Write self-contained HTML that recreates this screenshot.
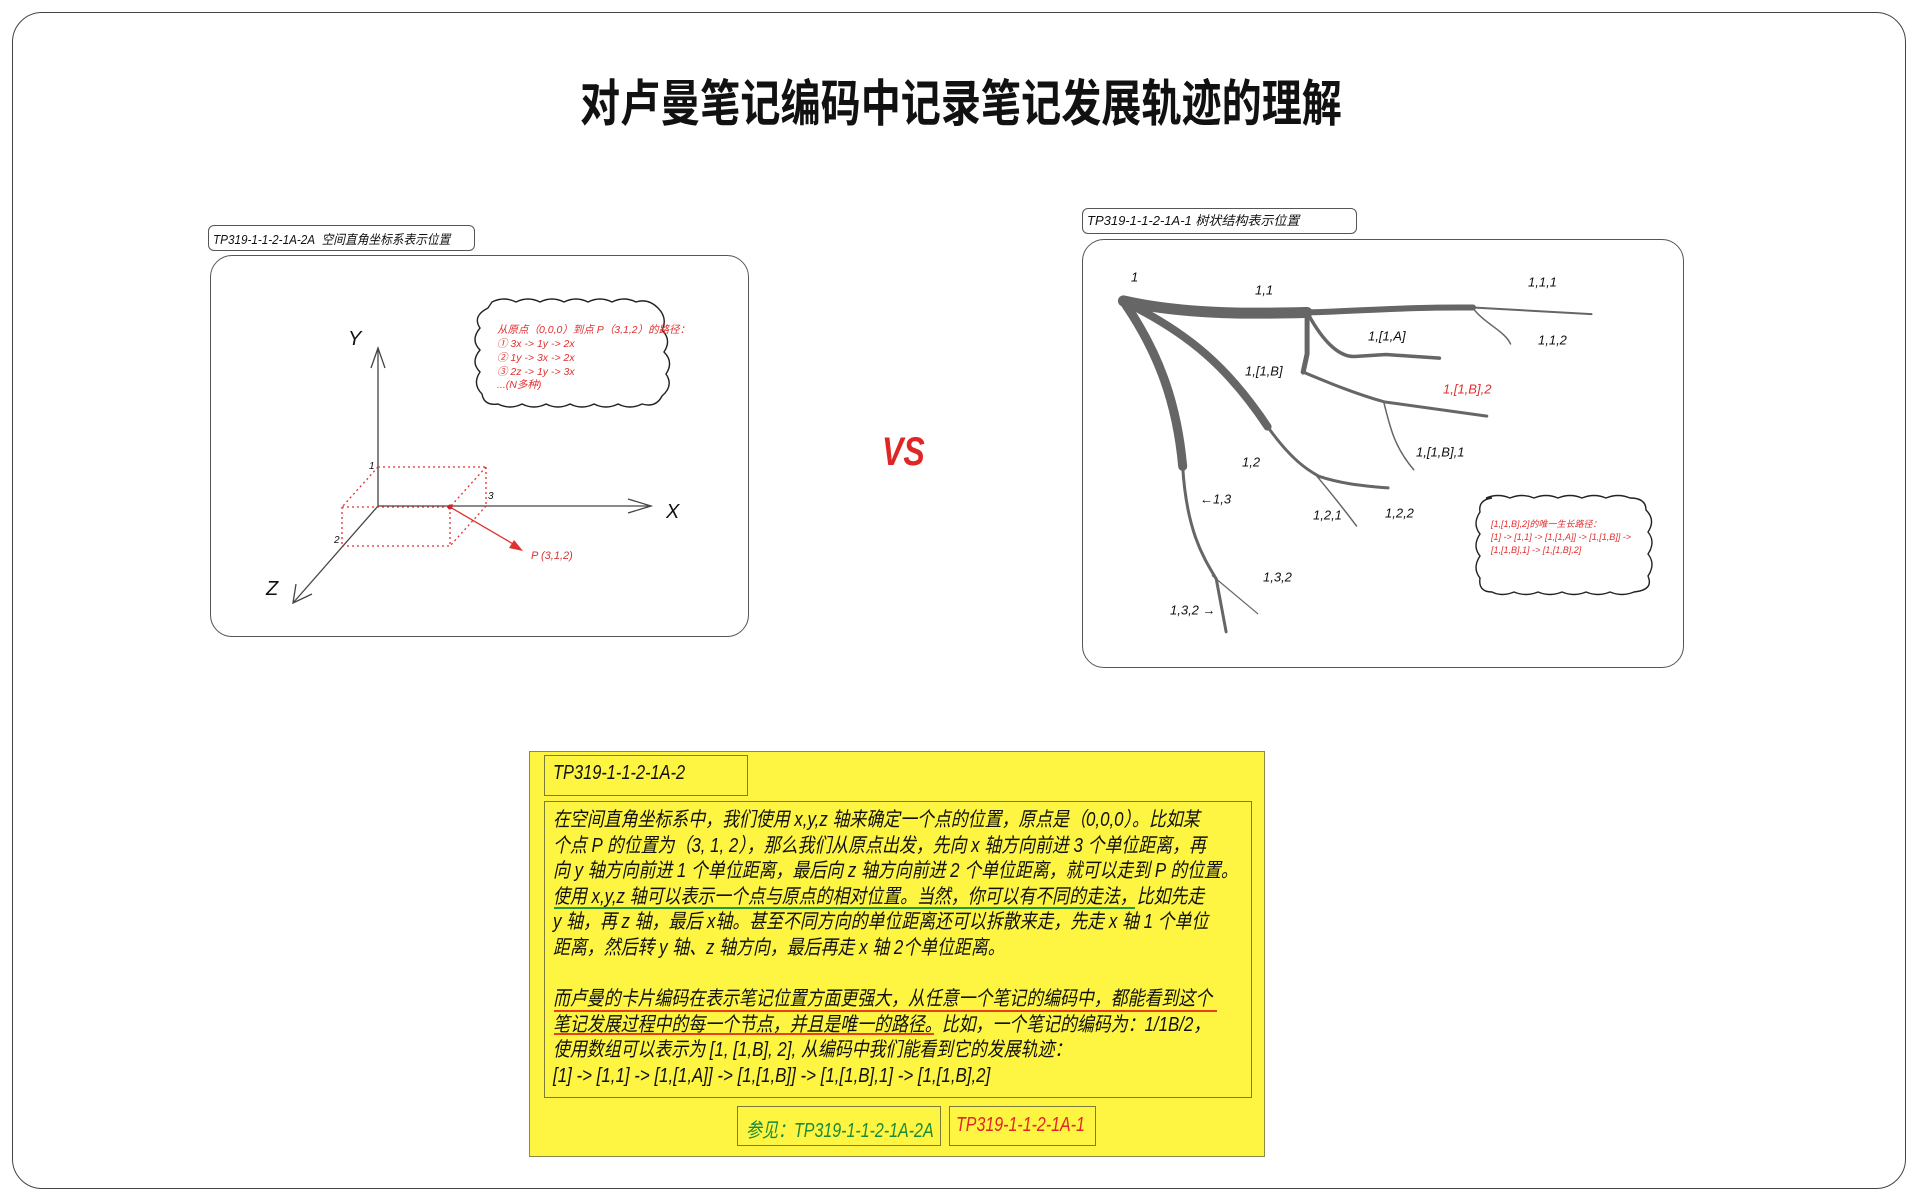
<!DOCTYPE html>
<html><head><meta charset="utf-8"><style>
html,body{margin:0;padding:0;background:#fff;}
body{width:1920px;height:1201px;position:relative;overflow:hidden;font-family:"Liberation Sans","Noto Sans CJK SC",sans-serif;}
.abs{position:absolute;}
.frame{left:12px;top:12px;width:1894px;height:1177px;border:1.5px solid #444;border-radius:30px;box-sizing:border-box;}
.title{left:580px;top:72px;width:1000px;font-size:50px;font-weight:bold;color:#111;transform:scaleX(0.802);transform-origin:left top;white-space:nowrap;line-height:64px;}
.lbl{border:1.5px solid #555;border-radius:6px;box-sizing:border-box;font-style:italic;white-space:nowrap;color:#111;}
.panel{border:1.5px solid #555;border-radius:22px;box-sizing:border-box;}
.yellow{left:529px;top:751px;width:736px;height:406px;background:#fdf542;border:1.5px solid #8a8a4a;box-sizing:border-box;}
.bx{border:1.5px solid #7a7a3a;box-sizing:border-box;}
.ln{position:absolute;left:553px;font-size:20px;line-height:25.6px;height:25.6px;white-space:nowrap;transform:scaleX(0.845);transform-origin:left center;color:#111;font-style:italic;}
.ul{position:absolute;height:2px;}
</style></head><body>
<div class="abs frame"></div>
<div class="abs title">对卢曼笔记编码中记录笔记发展轨迹的理解</div>

<div class="abs lbl" style="left:208px;top:225px;width:267px;height:26px;"></div>
<div class="abs" style="left:213px;top:229px;font-size:13px;font-style:italic;white-space:nowrap;color:#111;transform:scaleX(0.9);transform-origin:left top;">TP319-1-1-2-1A-2A&nbsp; 空间直角坐标系表示位置</div>
<div class="abs panel" style="left:210px;top:255px;width:539px;height:382px;"></div>

<div class="abs lbl" style="left:1082px;top:208px;width:275px;height:26px;font-size:13px;line-height:23px;padding-left:4px;">TP319-1-1-2-1A-1 树状结构表示位置</div>
<div class="abs panel" style="left:1082px;top:239px;width:602px;height:429px;"></div>

<div class="abs" style="left:882px;top:430px;font-size:40px;font-style:italic;font-weight:bold;color:#e02525;transform:scaleX(0.8);transform-origin:left top;">VS</div>

<svg class="abs" style="left:0;top:0" width="1920" height="1201" viewBox="0 0 1920 1201">
<g stroke="#444" stroke-width="1.3" fill="none">
<line x1="378" y1="506" x2="378" y2="348"/>
<polyline points="371,368 378,348 385,368"/>
<line x1="378" y1="506" x2="651" y2="506"/>
<polyline points="628,499 651,506 628,513"/>
<line x1="378" y1="506" x2="293" y2="603"/>
<polyline points="296,584 293,603 312,594"/>
</g>
<g stroke="#e03030" stroke-width="1.3" fill="none" stroke-dasharray="2,3">
<line x1="378" y1="467" x2="486" y2="467"/><line x1="486" y1="467" x2="486" y2="506"/>
<line x1="378" y1="467" x2="342" y2="507"/><line x1="486" y1="467" x2="450" y2="507"/>
<line x1="486" y1="506" x2="450" y2="546"/><line x1="342" y1="507" x2="450" y2="507"/>
<line x1="450" y1="507" x2="450" y2="546"/><line x1="342" y1="546" x2="450" y2="546"/>
<line x1="342" y1="507" x2="342" y2="546"/>
</g>
<circle cx="450" cy="507" r="2.5" fill="#d02030"/>
<line x1="450" y1="507" x2="520" y2="548" stroke="#e03030" stroke-width="1.3"/>
<polygon points="523,551 509,548 514,540" fill="#e03030"/>
<g font-family="Liberation Sans" font-style="italic" fill="#111">
<text x="348" y="345" font-size="20">Y</text>
<text x="666" y="518" font-size="20">X</text>
<text x="266" y="595" font-size="20">Z</text>
<text x="369" y="469" font-size="10">1</text>
<text x="488" y="499" font-size="10">3</text>
<text x="334" y="543" font-size="10">2</text>
</g>
<text x="531" y="559" font-size="11" font-style="italic" fill="#e03030" font-family="Liberation Sans">P (3,1,2)</text>
<path d="M492,302 q12,-6 24,0 q12,-6 24,0 q12,-6 24,0 q12,-6 24,0 q12,-6 24,0 q12,-6 24,0 q12,-4 22,6 q10,10 4,22 q10,10 2,22 q10,10 2,22 q8,12 -4,22 q-6,12 -20,8 q-12,6 -24,0 q-12,6 -24,0 q-12,6 -24,0 q-12,6 -24,0 q-12,6 -24,0 q-12,6 -24,0 q-14,2 -16,-10 q-10,-10 -2,-22 q-10,-10 0,-22 q-10,-10 0,-22 q-8,-12 8,-20 z" fill="#fff" stroke="#222" stroke-width="1.4"/>
<g font-size="10.5" font-style="italic" fill="#e03030" font-family="Liberation Sans,Noto Sans CJK SC,sans-serif">
<text x="497" y="333">从原点（0,0,0）到点 P（3,1,2）的路径：</text>
<text x="497" y="347">① 3x -&gt; 1y -&gt; 2x</text>
<text x="497" y="361">② 1y -&gt; 3x -&gt; 2x</text>
<text x="497" y="375">③ 2z -&gt; 1y -&gt; 3x</text>
<text x="497" y="388">...(N多种)</text>
</g>
<g transform="translate(1070.1,201.6) scale(0.395,0.331)" fill="none" stroke="#666" stroke-linecap="round">
<path d="M135,300 C300,345 500,338 600,335" stroke-width="11" vector-effect="non-scaling-stroke"/>
<path d="M600,335 C750,330 850,318 1020,320" stroke-width="6" vector-effect="non-scaling-stroke"/>
<path d="M1020,320 L1320,340" stroke-width="2" vector-effect="non-scaling-stroke"/>
<path d="M1020,322 C1050,370 1100,390 1115,430" stroke-width="1.5" vector-effect="non-scaling-stroke"/>
<path d="M600,340 L600,460 L590,515" stroke-width="5" vector-effect="non-scaling-stroke"/>
<path d="M605,345 C640,420 680,470 720,468 L800,462 L935,473" stroke-width="3.5" vector-effect="non-scaling-stroke"/>
<path d="M590,515 C650,545 720,580 795,605 L1055,648" stroke-width="3" vector-effect="non-scaling-stroke"/>
<path d="M795,610 C810,680 820,740 870,810" stroke-width="1.5" vector-effect="non-scaling-stroke"/>
<path d="M150,310 C300,400 400,500 500,680" stroke-width="8" vector-effect="non-scaling-stroke"/>
<path d="M500,680 C560,780 600,810 630,830 C680,850 730,858 805,865" stroke-width="3" vector-effect="non-scaling-stroke"/>
<path d="M625,830 C660,880 700,940 725,980" stroke-width="1.5" vector-effect="non-scaling-stroke"/>
<path d="M140,310 C220,450 270,600 285,800" stroke-width="9" vector-effect="non-scaling-stroke"/>
<path d="M285,800 C295,1000 340,1080 370,1140 L395,1300" stroke-width="3" vector-effect="non-scaling-stroke"/>
<path d="M360,1130 L475,1245" stroke-width="1.2" vector-effect="non-scaling-stroke"/>
</g>
<g font-size="13" font-style="italic" fill="#111" font-family="Liberation Sans" dominant-baseline="middle">
<text x="1131" y="278">1</text>
<text x="1255" y="291">1,1</text>
<text x="1528" y="283">1,1,1</text>
<text x="1538" y="341">1,1,2</text>
<text x="1368" y="337">1,[1,A]</text>
<text x="1245" y="372">1,[1,B]</text>
<text x="1443" y="390" fill="#e03030">1,[1,B],2</text>
<text x="1416" y="453">1,[1,B],1</text>
<text x="1242" y="463">1,2</text>
<text x="1200" y="500">←1,3</text>
<text x="1313" y="516">1,2,1</text>
<text x="1385" y="514">1,2,2</text>
<text x="1263" y="578">1,3,2</text>
<text x="1170" y="611">1,3,2 →</text>
</g>
<path d="M1486,498 q12,-5 24,0 q12,-5 24,0 q12,-5 24,0 q12,-5 24,0 q12,-5 24,0 q12,-5 24,0 q16,0 16,12 q10,10 2,22 q8,10 0,22 q8,10 0,22 q6,14 -14,16 q-12,5 -24,0 q-12,5 -24,0 q-12,5 -24,0 q-12,5 -24,0 q-12,5 -24,0 q-12,5 -22,0 q-14,0 -12,-14 q-8,-10 0,-22 q-8,-10 0,-22 q-8,-10 0,-22 q-2,-12 12,-14 z" fill="#fff" stroke="#222" stroke-width="1.4"/>
<g font-size="9" font-style="italic" fill="#e03030" font-family="Liberation Sans,Noto Sans CJK SC,sans-serif">
<text x="1491" y="527">[1,[1,B],2]的唯一生长路径：</text>
<text x="1491" y="540">[1] -&gt; [1,1] -&gt; [1,[1,A]] -&gt; [1,[1,B]] -&gt;</text>
<text x="1491" y="553">[1,[1,B],1] -&gt; [1,[1,B],2]</text>
</g>
</svg>

<div class="abs yellow"></div>
<div class="abs bx" style="left:544px;top:755px;width:204px;height:41px;"></div>
<div class="abs" style="left:553px;top:762px;font-size:20px;font-style:italic;transform:scaleX(0.82);transform-origin:left top;white-space:nowrap;color:#111;">TP319-1-1-2-1A-2</div>
<div class="abs bx" style="left:544px;top:801px;width:708px;height:297px;"></div>
<div class="ln" style="top:808px">在空间直角坐标系中，我们使用 x,y,z 轴来确定一个点的位置，原点是（0,0,0）。比如某</div>
<div class="ln" style="top:833.6px">个点 P 的位置为（3, 1, 2），那么我们从原点出发，先向 x 轴方向前进 3 个单位距离，再</div>
<div class="ln" style="top:859.2px">向 y 轴方向前进 1 个单位距离，最后向 z 轴方向前进 2 个单位距离，就可以走到 P 的位置。</div>
<div class="ln" style="top:884.8px">使用 x,y,z 轴可以表示一个点与原点的相对位置。当然，你可以有不同的走法，比如先走</div>
<div class="ln" style="top:910.4px">y 轴，再 z 轴，最后 x轴。甚至不同方向的单位距离还可以拆散来走，先走 x 轴 1 个单位</div>
<div class="ln" style="top:936px">距离，然后转 y 轴、z 轴方向，最后再走 x 轴 2个单位距离。</div>
<div class="ln" style="top:987.2px">而卢曼的卡片编码在表示笔记位置方面更强大，从任意一个笔记的编码中，都能看到这个</div>
<div class="ln" style="top:1012.8px">笔记发展过程中的每一个节点，并且是唯一的路径。比如，一个笔记的编码为：1/1B/2，</div>
<div class="ln" style="top:1038.4px">使用数组可以表示为 [1, [1,B], 2], 从编码中我们能看到它的发展轨迹：</div>
<div class="ln" style="top:1064px">[1] -&gt; [1,1] -&gt; [1,[1,A]] -&gt; [1,[1,B]] -&gt; [1,[1,B],1] -&gt; [1,[1,B],2]</div>
<div class="ul" style="left:554px;top:907px;width:581px;background:#1f9a3a;"></div>
<div class="ul" style="left:554px;top:1010px;width:663px;background:#e8401f;"></div>
<div class="ul" style="left:554px;top:1033px;width:380px;background:#e8401f;"></div>
<div class="abs bx" style="left:737px;top:1106px;width:204px;height:40px;"></div>
<div class="abs bx" style="left:949px;top:1106px;width:147px;height:40px;"></div>
<div class="abs" style="left:746px;top:1114px;font-size:20px;font-style:italic;color:#1a8a3a;white-space:nowrap;transform:scaleX(0.8);transform-origin:left top;">参见：TP319-1-1-2-1A-2A</div>
<div class="abs" style="left:956px;top:1114px;font-size:20px;font-style:italic;color:#e02525;white-space:nowrap;transform:scaleX(0.8);transform-origin:left top;">TP319-1-1-2-1A-1</div>
</body></html>
